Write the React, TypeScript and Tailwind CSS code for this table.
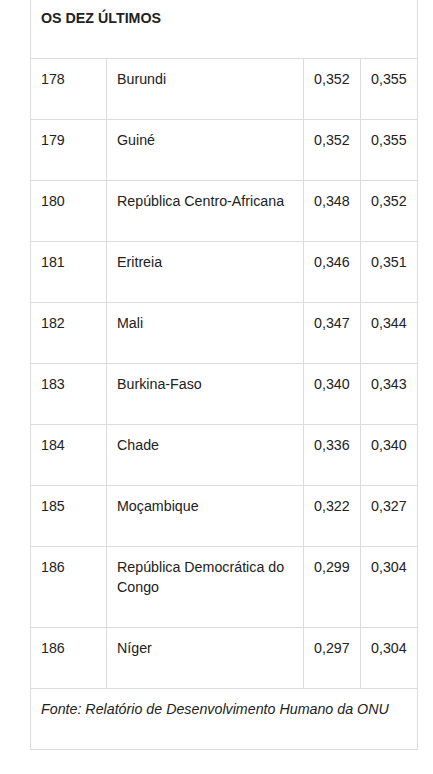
import React from 'react';

interface Row {
  rank: string;
  country: string;
  a: string;
  b: string;
}

const rows: Row[] = [
  { rank: '178', country: 'Burundi', a: '0,352', b: '0,355' },
  { rank: '179', country: 'Guiné', a: '0,352', b: '0,355' },
  { rank: '180', country: 'República Centro-Africana', a: '0,348', b: '0,352' },
  { rank: '181', country: 'Eritreia', a: '0,346', b: '0,351' },
  { rank: '182', country: 'Mali', a: '0,347', b: '0,344' },
  { rank: '183', country: 'Burkina-Faso', a: '0,340', b: '0,343' },
  { rank: '184', country: 'Chade', a: '0,336', b: '0,340' },
  { rank: '185', country: 'Moçambique', a: '0,322', b: '0,327' },
  { rank: '186', country: 'República Democrática do Congo', a: '0,299', b: '0,304' },
  { rank: '186', country: 'Níger', a: '0,297', b: '0,304' },
];

const cell = 'border-r border-b border-[#dcdcdc] pl-[10px] pr-[4px] pt-[10px] pb-[30px]';

const App = () => {
  return (
    <div
      className="min-h-screen bg-white text-[14.25px] leading-[20px] text-[#222]"
      style={{ fontFamily: '"Liberation Sans", Arial, sans-serif' }}
    >
      <div className="ml-[30px] -mt-[3px] w-[388px] grid grid-cols-[76px_197px_57px_57px] border-l border-t border-[#dcdcdc]">
        <div className={`${cell} col-span-4 font-bold`}>OS DEZ ÚLTIMOS</div>
        {rows.map((r, i) => (
          <React.Fragment key={i}>
            <div className={cell}>{r.rank}</div>
            <div className={cell}>{r.country}</div>
            <div className={cell}>{r.a}</div>
            <div className={cell}>{r.b}</div>
          </React.Fragment>
        ))}
        <div className={`${cell} col-span-4 italic`}>
          Fonte: Relatório de Desenvolvimento Humano da ONU
        </div>
      </div>
    </div>
  );
};

export default App;
